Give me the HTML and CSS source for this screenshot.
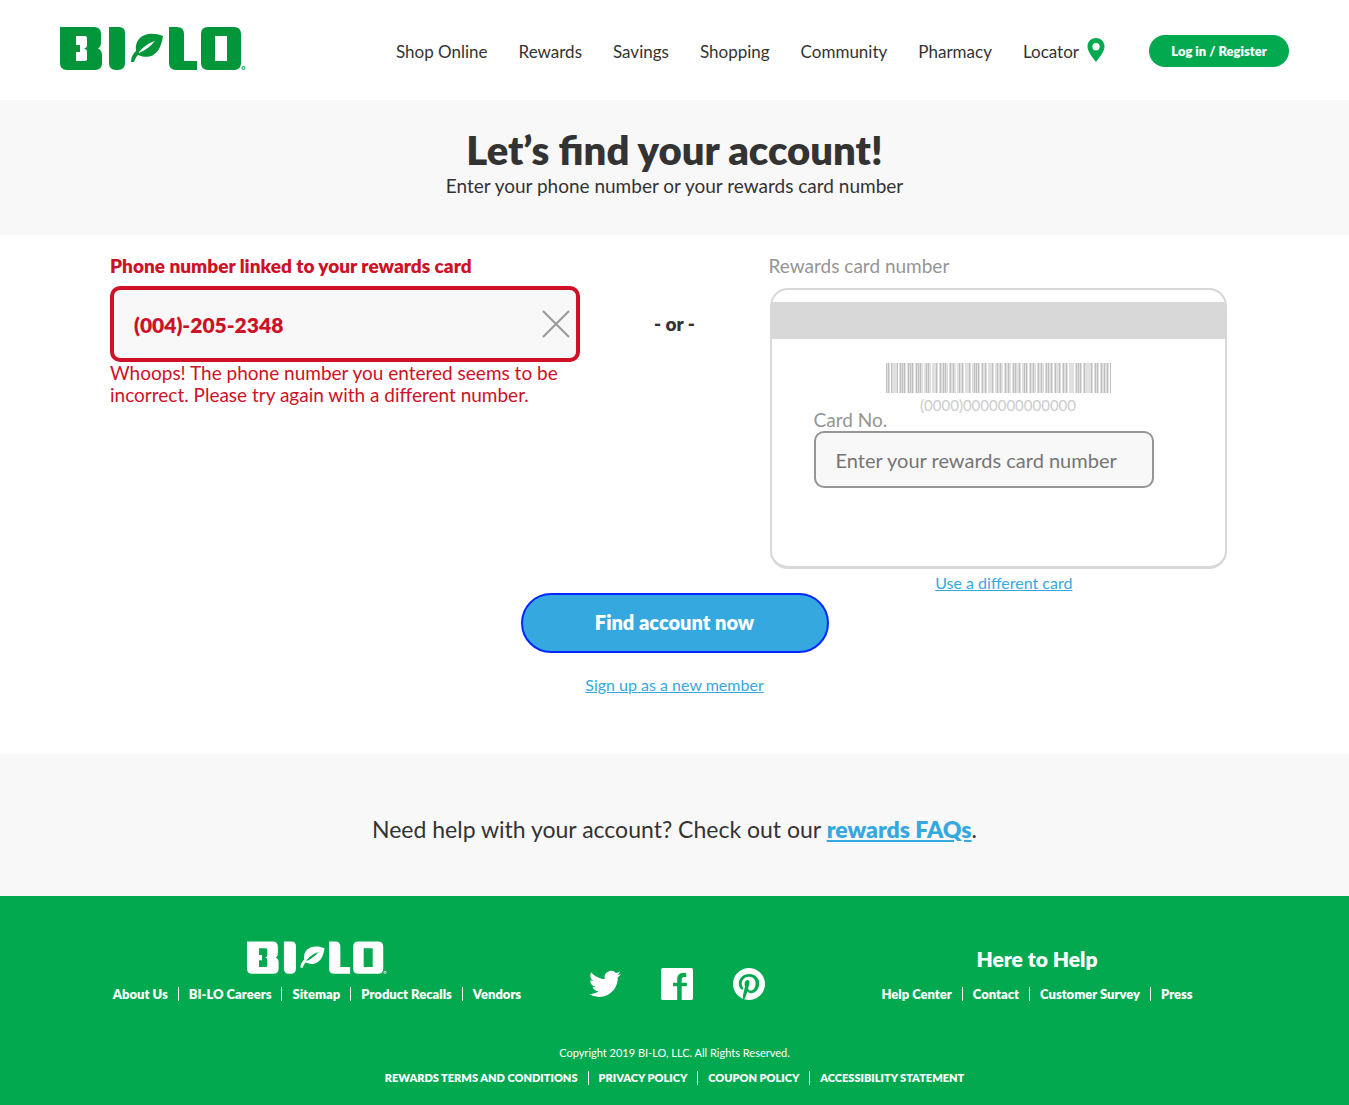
FILE: index.html
```html
<!DOCTYPE html>
<html lang="en">
<head>
<meta charset="utf-8">
<meta name="viewport" content="width=device-width, initial-scale=1">
<title>Find your account | BI-LO</title>
<link rel="stylesheet" href="styles.css">
</head>
<body>
<svg class="defs" aria-hidden="true">
  <symbol id="logo" viewBox="0 0 186 44">
    <path fill-rule="evenodd" d="M0 0H34Q41 0 41 7V15Q41 20 38 21.500Q42 23 42 28V36Q42 43 35 43H7Q0 43 0 36ZM16 9V18H20V25H16V34H25Q27 34 27 32V25Q27 22 24 21.500Q27 21 27 18V11Q27 9 25 9Z"/>
    <path d="M49 0H59Q65 0 65 6V36Q65 43 58 43H56Q49 43 49 36ZM109 0H117Q124 0 124 7V34H137V43H116Q109 43 109 36Z"/>
    <path fill-rule="evenodd" d="M148 0H174Q181 0 181 7V36Q181 43 174 43H148Q141 43 141 36V7Q141 0 148 0ZM155 9V34H167V9Z"/>
    <path fill-rule="evenodd" d="M103 9C88 3 74 9 76 24C73 27 71 30 71 35L74 35C75 32 76 30 78 28C92 34 101 25 103 9ZM79 25C84 19 89 16 95 14C91 19 86 23 79 26Z"/>
    <circle cx="183.500" cy="41" r="1.500" fill="none" stroke="currentColor"/>
  </symbol>
</svg>

<header class="site-header">
  <a class="logo" href="#" aria-label="BI-LO home"><svg><use href="#logo"/></svg></a>
  <nav class="main-nav">
    <a href="#">Shop Online</a>
    <a href="#">Rewards</a>
    <a href="#">Savings</a>
    <a href="#">Shopping</a>
    <a href="#">Community</a>
    <a href="#">Pharmacy</a>
    <a class="locator" href="#">Locator
      <svg viewBox="0 0 17 24" aria-hidden="true"><path fill-rule="evenodd" d="M8.500 0C13.500 0 17 3.800 17 8.500C17 13 13 18 8.500 24C4 18 0 13 0 8.500C0 3.800 3.500 0 8.500 0ZM8.500 5A3.700 3.700 0 1 0 8.500 12.400A3.700 3.700 0 1 0 8.500 5Z"/></svg>
    </a>
  </nav>
  <button class="login" type="button">Log in / Register</button>
</header>

<main>
  <section class="hero">
    <h1>Let’s find your account!</h1>
    <p>Enter your phone number or your rewards card number</p>
  </section>

  <form class="lookup">
    <div class="choices">
      <div class="phone">
        <label for="phone">Phone number linked to your rewards card</label>
        <div class="phone-box">
          <input id="phone" type="text" value="(004)-205-2348" aria-describedby="phone-error">
          <button class="clear" type="button" aria-label="Clear">
            <svg viewBox="0 0 28 28"><path d="M1 1L27 27M27 1L1 27"/></svg>
          </button>
        </div>
        <p class="error" id="phone-error">Whoops! The phone number you entered seems to be incorrect. Please try again with a different number.</p>
      </div>
      <p class="or">- or -</p>
      <div class="rewards">
        <h2>Rewards card number</h2>
        <div class="card">
          <div class="stripe"></div>
          <svg class="barcode" viewBox="0 0 225 30" aria-hidden="true">
            <path class="base" d="M0 15H225"/>
            <path class="bars" d="M0 0h1v30h-1zM2 0h1v30h-1zM5 0h1v30h-1zM11 0h1v30h-1zM14 0h1v30h-1zM16 0h1v30h-1zM18 0h1v30h-1zM22 0h1v30h-1zM24 0h1v30h-1zM26 0h1v30h-1zM30 0h1v30h-1zM32 0h1v30h-1zM34 0h1v30h-1zM40 0h1v30h-1zM42 0h1v30h-1zM50 0h1v30h-1zM54 0h1v30h-1zM57 0h1v30h-1zM59 0h1v30h-1zM64 0h1v30h-1zM67 0h1v30h-1zM73 0h1v30h-1zM76 0h1v30h-1zM83 0h1v30h-1zM88 0h1v30h-1zM90 0h1v30h-1zM92 0h1v30h-1zM96 0h1v30h-1zM99 0h1v30h-1zM106 0h1v30h-1zM111 0h1v30h-1zM114 0h1v30h-1zM119 0h1v30h-1zM122 0h1v30h-1zM127 0h1v30h-1zM129 0h1v30h-1zM133 0h1v30h-1zM138 0h1v30h-1zM140 0h1v30h-1zM144 0h1v30h-1zM147 0h1v30h-1zM152 0h1v30h-1zM155 0h1v30h-1zM160 0h1v30h-1zM162 0h1v30h-1zM165 0h1v30h-1zM169 0h1v30h-1zM173 0h1v30h-1zM177 0h1v30h-1zM180 0h1v30h-1zM190 0h1v30h-1zM192 0h1v30h-1zM194 0h1v30h-1zM198 0h1v30h-1zM205 0h1v30h-1zM209 0h1v30h-1zM211 0h1v30h-1zM215 0h1v30h-1zM218 0h1v30h-1zM221 0h1v30h-1zM224 0h1v30h-1z"/>
            <path class="gaps" d="M4 0h1v30h-1zM12 0h1v30h-1zM20 0h1v30h-1zM28 0h1v30h-1zM37 0h1v30h-1zM45 0h1v30h-1zM52 0h1v30h-1zM62 0h1v30h-1zM70 0h1v30h-1zM78 0h1v30h-1zM85 0h1v30h-1zM94 0h1v30h-1zM101 0h1v30h-1zM108 0h1v30h-1zM117 0h1v30h-1zM125 0h1v30h-1zM135 0h1v30h-1zM142 0h1v30h-1zM150 0h1v30h-1zM158 0h1v30h-1zM167 0h1v30h-1zM175 0h1v30h-1zM182 0h1v30h-1zM188 0h1v30h-1zM196 0h1v30h-1zM207 0h1v30h-1zM213 0h1v30h-1zM223 0h1v30h-1z"/>
          </svg>
          <span class="sample">(0000)0000000000000</span>
          <div class="card-field">
            <label for="card">Card No.</label>
            <input id="card" type="text" placeholder="Enter your rewards card number">
          </div>
        </div>
        <a class="small-link" href="#">Use a different card</a>
      </div>
    </div>
    <button class="submit" type="submit">Find account now</button>
    <a class="small-link" href="#">Sign up as a new member</a>
  </form>

  <section class="help">
    <p>Need help with your account? Check out our <a href="#">rewards FAQs</a>.</p>
  </section>
</main>

<footer class="site-footer">
  <div class="footer-top">
    <div class="footer-col">
      <a class="footer-logo" href="#" aria-label="BI-LO home"><svg><use href="#logo"/></svg></a>
      <ul class="links">
        <li><a href="#">About Us</a></li>
        <li><a href="#">BI-LO Careers</a></li>
        <li><a href="#">Sitemap</a></li>
        <li><a href="#">Product Recalls</a></li>
        <li><a href="#">Vendors</a></li>
      </ul>
    </div>
    <div class="social">
      <a href="#" aria-label="Twitter"><svg viewBox="0 0 24 24"><path d="M23.953 4.570a10 10 0 01-2.825.775 4.958 4.958 0 002.163-2.723c-.951.555-2.005.959-3.127 1.184a4.920 4.920 0 00-8.384 4.482C7.690 8.095 4.067 6.130 1.640 3.162a4.822 4.822 0 00-.666 2.475c0 1.710.870 3.213 2.188 4.096a4.904 4.904 0 01-2.228-.616v.060a4.923 4.923 0 003.946 4.827 4.996 4.996 0 01-2.212.085 4.936 4.936 0 004.604 3.417 9.867 9.867 0 01-6.102 2.105c-.390 0-.779-.023-1.170-.067a13.995 13.995 0 007.557 2.209c9.053 0 13.998-7.496 13.998-13.985 0-.210 0-.420-.015-.630A9.935 9.935 0 0024 4.590z"/></svg></a>
      <a href="#" aria-label="Facebook"><svg viewBox="0 0 24 24"><path d="M22.676 0H1.324C.593 0 0 .593 0 1.324v21.352C0 23.408.593 24 1.324 24h10.800v-10.300H9v-2.700h3.124V8.410c0-3.099 1.894-4.585 4.659-4.585 1.325 0 1.800.097 2.132.141v2.700h-1.300c-1.700 0-2.100.721-2.100 1.771v2.563h3.892v2.700H15.515V24h7.160c.733 0 1.325-.592 1.325-1.324V1.324C24 .593 23.408 0 22.676 0"/></svg></a>
      <a href="#" aria-label="Pinterest"><svg viewBox="0 0 24 24"><path d="M12 0C5.373 0 0 5.372 0 12c0 5.084 3.163 9.426 7.627 11.174-.105-.949-.2-2.405.042-3.441.218-.937 1.407-5.965 1.407-5.965s-.359-.719-.359-1.782c0-1.668.967-2.914 2.171-2.914 1.023 0 1.518.769 1.518 1.690 0 1.029-.655 2.568-.994 3.995-.283 1.194.599 2.169 1.777 2.169 2.133 0 3.772-2.249 3.772-5.495 0-2.873-2.064-4.882-5.012-4.882-3.414 0-5.418 2.561-5.418 5.207 0 1.031.397 2.138.893 2.738a.36.36 0 01.083.345l-.333 1.360c-.053.220-.174.267-.402.161-1.499-.698-2.436-2.889-2.436-4.649 0-3.785 2.750-7.262 7.929-7.262 4.163 0 7.398 2.967 7.398 6.931 0 4.136-2.607 7.464-6.227 7.464-1.216 0-2.359-.631-2.750-1.378l-.748 2.853c-.271 1.043-1.002 2.350-1.492 3.146C9.570 23.812 10.763 24 12 24c6.627 0 12-5.373 12-12 0-6.628-5.373-12-12-12z"/></svg></a>
    </div>
    <div class="footer-col">
      <h2>Here to Help</h2>
      <ul class="links">
        <li><a href="#">Help Center</a></li>
        <li><a href="#">Contact</a></li>
        <li><a href="#">Customer Survey</a></li>
        <li><a href="#">Press</a></li>
      </ul>
    </div>
  </div>
  <p class="copyright">Copyright 2019 BI-LO, LLC. All Rights Reserved.</p>
  <ul class="links legal">
    <li><a href="#">REWARDS TERMS AND CONDITIONS</a></li>
    <li><a href="#">PRIVACY POLICY</a></li>
    <li><a href="#">COUPON POLICY</a></li>
    <li><a href="#">ACCESSIBILITY STATEMENT</a></li>
  </ul>
</footer>
</body>
</html>
```
FILE: styles.css
```css
* { box-sizing: border-box; }
body {
  margin: 0;
  font-family: Lato, "Noto Sans", sans-serif;
  font-size: 18px;
  line-height: 22px;
  color: #333;
  background: #fff;
}
h1, h2, p, ul { margin: 0; padding: 0; }
a { color: inherit; text-decoration: none; }
button, input { font-family: inherit; }
svg { display: block; fill: currentColor; }
.defs { display: none; }

.site-header {
  display: flex;
  align-items: center;
  padding: 27px 60px 29px;
}
.logo { color: #009639; }
.logo svg { width: 186px; height: 44px; }
.main-nav {
  display: flex;
  gap: 31px;
  margin: 0 44px 0 auto;
  font-size: 17px;
  white-space: nowrap;
}
.main-nav a { padding-top: 6px; }
.main-nav .locator { display: flex; gap: 8px; }
.locator svg { width: 18px; height: 24px; margin-top: -3px; color: #02a94f; }
.login {
  width: 140px;
  height: 32px;
  margin-top: 4px;
  padding: 0;
  border: 0;
  border-radius: 16px;
  background: #02a94f;
  color: #fff;
  font-size: 13px;
  font-weight: 800;
}

.hero {
  padding: 26px 20px 38px;
  background: #f8f8f8;
  text-align: center;
}
.hero h1 {
  font-size: 40px;
  font-weight: 800;
  line-height: 48px;
}
.hero p { font-size: 19px; line-height: 23px; }

.lookup {
  display: flex;
  flex-direction: column;
  align-items: center;
  padding: 20px 110px 58px;
}
.choices {
  display: grid;
  grid-template-columns: 5fr 2fr 5fr;
  width: 100%;
}
.phone { color: #ce1126; }
.phone label { display: block; font-size: 19px; font-weight: 800; }
.phone-box {
  display: flex;
  align-items: center;
  height: 76px;
  margin-top: 9px;
  padding: 0 6px 0 20px;
  border: 4px solid #ce1126;
  border-radius: 10px;
  background: #f8f8f8;
}
.phone-box input {
  flex: 1;
  min-width: 0;
  padding: 0;
  border: 0;
  outline: 0;
  background: none;
  color: #ce1126;
  font-size: 21px;
  font-weight: 800;
}
.clear { padding: 0; border: 0; background: none; color: #999; }
.clear svg { width: 28px; height: 28px; stroke: currentColor; stroke-width: 2; }
.error { font-size: 19px; }
.or { padding-top: 58px; font-size: 19px; font-weight: 800; text-align: center; }

.rewards { display: flex; flex-direction: column; }
.rewards h2 { font-size: 19px; line-height: 22px; font-weight: 400; color: #959595; }
.card {
  display: flex;
  flex-direction: column;
  align-items: center;
  width: 457px;
  max-width: 100%;
  height: 281px;
  margin: 11px 0 0 1px;
  padding-top: 12px;
  border: 2px solid #d8d8d8;
  border-bottom-width: 3px;
  border-radius: 18px;
}
.stripe { width: 100%; height: 37px; background: #d8d8d8; }
.barcode { width: 225px; height: 30px; margin-top: 24px; }
.base { stroke: #e0e0e0; stroke-width: 30; }
.bars { fill: #bfbfbf; }
.gaps { fill: #fff; }
.sample { margin-top: 4px; color: #ccc; font-size: 15px; line-height: 16px; }
.card-field { align-self: stretch; padding: 0 71px 0 42px; }
.card-field label {
  display: block;
  padding-bottom: 4px;
  color: #959595;
  font-size: 19px;
  line-height: 14px;
}
.card-field input {
  width: 100%;
  height: 57px;
  padding: 0 20px;
  border: 2px solid #959595;
  border-radius: 10px;
  background: #f8f8f8;
  color: #333;
  font-size: 20px;
}
.card-field input::placeholder { color: #757575; opacity: 1; }
.small-link {
  align-self: center;
  color: #36a8e0;
  font-size: 16px;
  line-height: 22px;
  text-decoration: underline;
}
.rewards .small-link { margin-top: 4px; line-height: 20px; }
.submit {
  width: 308px;
  height: 60px;
  margin-bottom: 21px;
  padding-bottom: 4px;
  border: 2px solid #0029ff;
  border-radius: 30px;
  background: #36a8e0;
  color: #fff;
  font-size: 20px;
  font-weight: 800;
}

.help {
  padding: 62px 20px 54px;
  background: #f8f8f8;
  text-align: center;
  font-size: 23px;
  line-height: 26px;
}
.help a { color: #36a8e0; font-weight: 800; text-decoration: underline; }

.site-footer {
  padding: 45px 0 20px;
  background: #02a94f;
  color: #fff;
}
.footer-top {
  display: grid;
  grid-template-columns: 11fr 7fr 11fr;
  padding: 0 92px 0 97px;
}
.footer-col {
  display: flex;
  flex-direction: column;
  align-items: center;
  justify-content: space-between;
  height: 60px;
}
.footer-logo svg { width: 140px; height: 34px; }
.footer-col h2 { font-size: 21px; font-weight: 800; line-height: 36px; }
.links {
  display: flex;
  justify-content: center;
  list-style: none;
  font-size: 13px;
  font-weight: 800;
  line-height: 14px;
  white-space: nowrap;
}
.links li { padding: 0 10px; }
.links li + li { border-left: 1px solid #fff; }
.social { display: flex; justify-content: center; gap: 40px; padding-top: 27px; }
.social svg { width: 32px; height: 32px; }
.copyright {
  margin: 42px 0 8px;
  font-size: 11px;
  line-height: 20px;
  text-align: center;
}
.legal { font-size: 11px; }
```
